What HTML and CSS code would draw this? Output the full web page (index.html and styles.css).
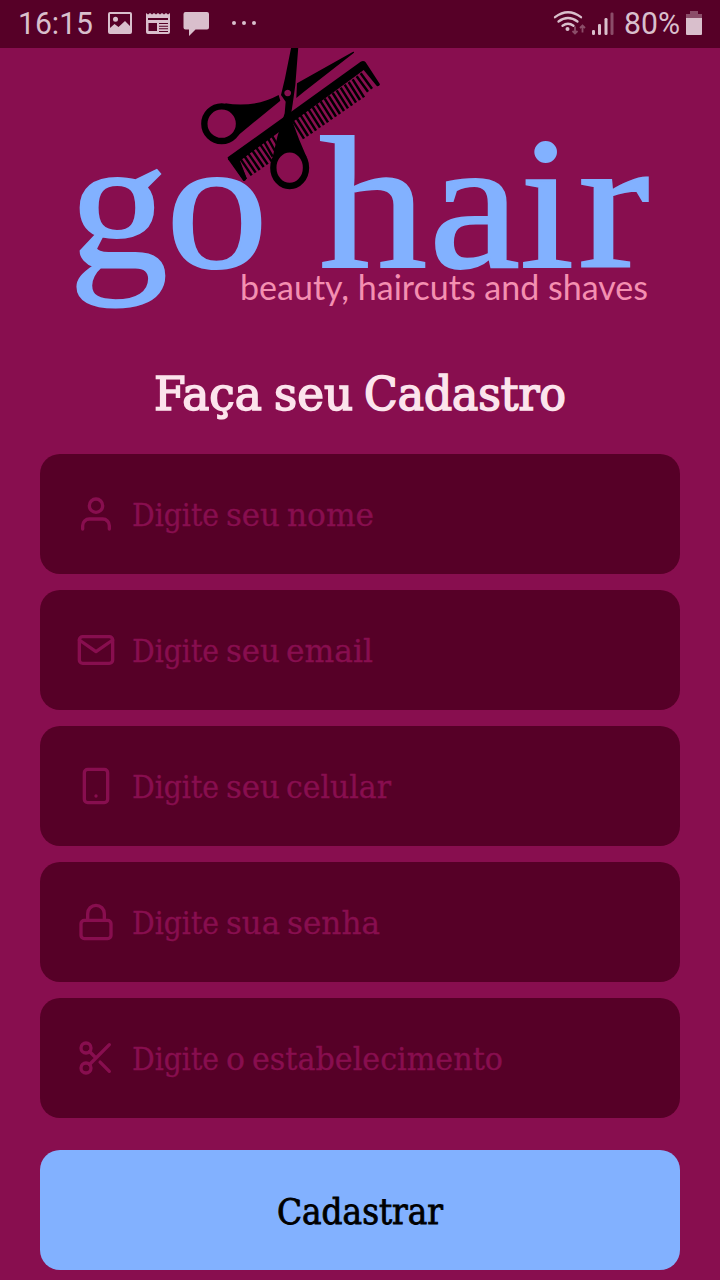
FILE: index.html
```html
<!DOCTYPE html>
<html lang="pt-BR">
<head>
<meta charset="utf-8">
<title>go hair</title>
<link rel="stylesheet" href="styles.css">
</head>
<body>
<header class="status">
  <svg class="status-art" viewBox="0 0 720 48">
    <text x="18" y="34" textLength="75" lengthAdjust="spacingAndGlyphs">16:15</text>
    <path fill-rule="evenodd" d="M110 12h20q2 0 2 2v18q0 2-2 2h-20q-2 0-2-2v-18q0-2 2-2zM110 14v14l4.500-4 4 3 6.500-6 5 5v-12zM113 19.300a2.500 2.500 0 1 0 5 0a2.500 2.500 0 1 0-5 0z"/>
    <path fill-rule="evenodd" d="M146 13l2 1.500 2-1.500 2 1.500 2-1.500 2 1.500 2-1.500 2 1.500 2-1.500 2 1.500 2-1.500 2 1.500 2-1.500V32q0 2-2 2h-20q-2 0-2-2zM148 18v2h20v-2zM148.500 23v8h8.500v-8zM159 23v1h9v-1zM159 25.700v1h9v-1zM159 28.300v1h9v-1zM159 31v1h9v-1z"/>
    <path d="M185.500 12h21.500q2 0 2 2v13.500q0 2-2 2h-11.500l-6.500 6.500v-6.500h-3.500q-2 0-2-2v-13.500q0-2 2-2z"/>
    <circle cx="234" cy="23" r="2"/><circle cx="244" cy="23" r="2"/><circle cx="254" cy="23" r="2"/>
    <g class="wifi"><path d="M555 17.200q13-9.800 26 0M558.500 21.500q9.500-7 19 0M562.500 25.700q5.500-4 11 0"/></g>
    <circle cx="567.500" cy="29" r="2"/>
    <path class="dim-line" d="M575 26.500v7M572.500 31l2.500 2.500 2.500-2.500M582.500 32.500v-7M580 28l2.500-2.500 2.500 2.500"/>
    <rect x="592" y="30" width="3" height="5" rx="1.300"/><rect x="598" y="24" width="3" height="11" rx="1.300"/><rect x="604.500" y="18" width="3" height="17" rx="1.300"/><rect class="dim" x="610.500" y="12.500" width="3" height="22.500" rx="1.300"/>
    <text x="624" y="34" textLength="56" lengthAdjust="spacingAndGlyphs">80%</text>
    <path class="dim" d="M690 11h8v3h4v5h-16v-5h4z"/><path d="M686 18h16v16q0 1-1 1h-14q-1 0-1-1z"/>
  </svg>
</header>
<main class="screen">
  <svg class="logo" viewBox="0 48 720 272">
    <g class="tools" transform="translate(190 40) scale(.33333)">
      <path d="M113 352L512 65q9-5 15 2l43 66q-2 7-9 6L521 90 500 106 308 246 150 362l20 53q-4 8-9 8z"/>
      <path d="M113 352L143 352 170 415q-4 10-10 7L114 358z"/>
      <path class="teeth" d="M151 356l34 50M163 348l34 50M175 340l34 50M187 331l34 50M199 323l34 50M211 314l34 50M223 306l25 44M235 297l20 36M247 289l18 30M308 242l34 54M320 234l34 54M332 226l34 54M344 218l34 54M356 209l34 54M368 201l34 54M380 193l34 54M392 184l34 54M404 176l34 54M416 168l34 54M428 159l34 54M440 151l34 54M452 143l34 54M464 134l34 54M476 126l34 54M488 118l34 54M500 109l34 46M512 100l34 46"/>
      <path d="M321 130L484 38q10-6 8 0L340 157 319 174z"/>
      <path fill-rule="evenodd" d="M304 20h21L316 135 308 192 302 230 328 300 350 352Q299 300 248 352L262 290 284 220 287 185 273 165 285 115zM293 149a10 10 0 1 0 .1 0z"/>
      <ellipse class="ring" cx="299" cy="383" rx="49" ry="55"/>
      <path d="M105 190Q195 204 266 165L271 182 132 296Q165 230 105 190z"/>
      <ellipse class="ring" cx="95" cy="251" rx="52" ry="52"/>
    </g>
    <text class="wordmark" y="267"><tspan x="69" textLength="99" lengthAdjust="spacingAndGlyphs">g</tspan><tspan x="166" textLength="102" lengthAdjust="spacingAndGlyphs">o</tspan> <tspan x="319" textLength="108" lengthAdjust="spacingAndGlyphs">h</tspan><tspan x="429" textLength="91" lengthAdjust="spacingAndGlyphs">a</tspan><tspan x="520" textLength="54" lengthAdjust="spacingAndGlyphs">i</tspan><tspan x="578" textLength="71.500" lengthAdjust="spacingAndGlyphs">r</tspan></text>
    <text class="tagline" x="240" y="299.500" textLength="408" lengthAdjust="spacingAndGlyphs">beauty, haircuts and shaves</text>
  </svg>
  <h1 class="title"><svg class="title-art" viewBox="0 0 640 70"><text y="50"><tspan x="114" textLength="108" lengthAdjust="spacingAndGlyphs">Faça</tspan> <tspan x="234" textLength="79" lengthAdjust="spacingAndGlyphs">seu</tspan> <tspan x="324" textLength="202" lengthAdjust="spacingAndGlyphs">Cadastro</tspan></text></svg></h1>
  <form class="form">
    <label class="field"><svg class="icon" viewBox="0 0 24 24"><path d="M20 21v-2a4 4 0 0 0-4-4H8a4 4 0 0 0-4 4v2"/><circle cx="12" cy="7" r="4"/></svg><svg class="hint" viewBox="0 0 500 60"><text y="42"><tspan x="0" textLength="87" lengthAdjust="spacingAndGlyphs">Digite</tspan> <tspan x="94" textLength="54" lengthAdjust="spacingAndGlyphs">seu</tspan> <tspan x="155" textLength="87" lengthAdjust="spacingAndGlyphs">nome</tspan></text></svg></label>
    <label class="field"><svg class="icon" viewBox="0 0 24 24"><path d="M4 4h16c1.100 0 2 .9 2 2v12c0 1.100-.9 2-2 2H4c-1.100 0-2-.9-2-2V6c0-1.100.9-2 2-2z"/><path d="M22 6l-10 7L2 6"/></svg><svg class="hint" viewBox="0 0 500 60"><text y="42"><tspan x="0" textLength="87" lengthAdjust="spacingAndGlyphs">Digite</tspan> <tspan x="94" textLength="54" lengthAdjust="spacingAndGlyphs">seu</tspan> <tspan x="154" textLength="87" lengthAdjust="spacingAndGlyphs">email</tspan></text></svg></label>
    <label class="field"><svg class="icon" viewBox="0 0 24 24"><rect x="5" y="2" width="14" height="20" rx="2"/><path d="M12 18h.01"/></svg><svg class="hint" viewBox="0 0 500 60"><text y="42"><tspan x="0" textLength="87" lengthAdjust="spacingAndGlyphs">Digite</tspan> <tspan x="94" textLength="54" lengthAdjust="spacingAndGlyphs">seu</tspan> <tspan x="154" textLength="105" lengthAdjust="spacingAndGlyphs">celular</tspan></text></svg></label>
    <label class="field"><svg class="icon" viewBox="0 0 24 24"><rect x="3" y="11" width="18" height="11" rx="2"/><path d="M7 11V7a5 5 0 0 1 10 0v4"/></svg><svg class="hint" viewBox="0 0 500 60"><text y="42"><tspan x="0" textLength="87" lengthAdjust="spacingAndGlyphs">Digite</tspan> <tspan x="94" textLength="54" lengthAdjust="spacingAndGlyphs">sua</tspan> <tspan x="155" textLength="93" lengthAdjust="spacingAndGlyphs">senha</tspan></text></svg></label>
    <label class="field"><svg class="icon" viewBox="0 0 24 24"><circle cx="6" cy="6" r="3"/><circle cx="6" cy="18" r="3"/><path d="M20 4L8.120 15.880M14.470 14.480L20 20M8.120 8.120L12 12"/></svg><svg class="hint" viewBox="0 0 500 60"><text y="42"><tspan x="0" textLength="87" lengthAdjust="spacingAndGlyphs">Digite</tspan> <tspan x="94" textLength="19" lengthAdjust="spacingAndGlyphs">o</tspan> <tspan x="120" textLength="251" lengthAdjust="spacingAndGlyphs">estabelecimento</tspan></text></svg></label>
    <button class="submit" type="button"><svg class="submit-art" viewBox="0 0 640 120"><text x="237" y="74" textLength="166" lengthAdjust="spacingAndGlyphs">Cadastrar</text></svg></button>
  </form>
</main>
</body>
</html>
```
FILE: styles.css
```css
* { box-sizing: border-box; }
body { margin: 0; width: 720px; height: 1280px; overflow: hidden; background: #880e4f; }
svg { display: block; }
.status { height: 48px; background: #560027; }
.status-art { width: 720px; height: 48px; fill: #d9bfcc; font: 31px Roboto, sans-serif; }
.wifi { fill: none; stroke: #d9bfcc; stroke-width: 2.3; stroke-linecap: round; }
.dim { fill: #8b4d69; }
.dim-line { fill: none; stroke: #8b4d69; stroke-width: 1.8; }
.screen { display: flex; flex-direction: column; }
.logo { width: 720px; height: 272px; overflow: hidden; }
.tools { fill: #000; }
.teeth { fill: none; stroke: #000; stroke-width: 7.5; }
.ring { fill: none; stroke: #000; stroke-width: 19; }
.wordmark { font: 189px "Liberation Serif", serif; fill: #82b1ff; stroke: #82b1ff; stroke-width: 2px; }
.tagline { font: 34px Lato, sans-serif; fill: #f48fb1; }
.title { margin: 40px 40px 24px; height: 70px; }
.title-art { width: 640px; height: 70px; font: 400 46px "Roboto Slab", "DejaVu Serif Condensed", "DejaVu Serif", serif; fill: #fce4ec; stroke: #fce4ec; stroke-width: 1.5px; }
.form { display: flex; flex-direction: column; gap: 16px; margin: 0 40px; }
.field { display: flex; align-items: center; gap: 16px; height: 120px; padding: 0 36px; border-radius: 20px; background: #560027; }
.icon { flex: none; width: 40px; height: 40px; fill: none; stroke: #880e4f; stroke-width: 2; stroke-linecap: round; stroke-linejoin: round; }
.hint { flex: none; width: 500px; height: 60px; font: 31px "Roboto Slab", "DejaVu Serif Condensed", "DejaVu Serif", serif; fill: #880e4f; stroke: #880e4f; stroke-width: .3px; }
.submit { height: 120px; margin-top: 16px; padding: 0; border: 0; border-radius: 20px; background: #82b1ff; overflow: hidden; }
.submit-art { width: 640px; height: 120px; font: 35px "Roboto Slab", "DejaVu Serif Condensed", "DejaVu Serif", serif; fill: #000; stroke: #000; stroke-width: .8px; }
```
